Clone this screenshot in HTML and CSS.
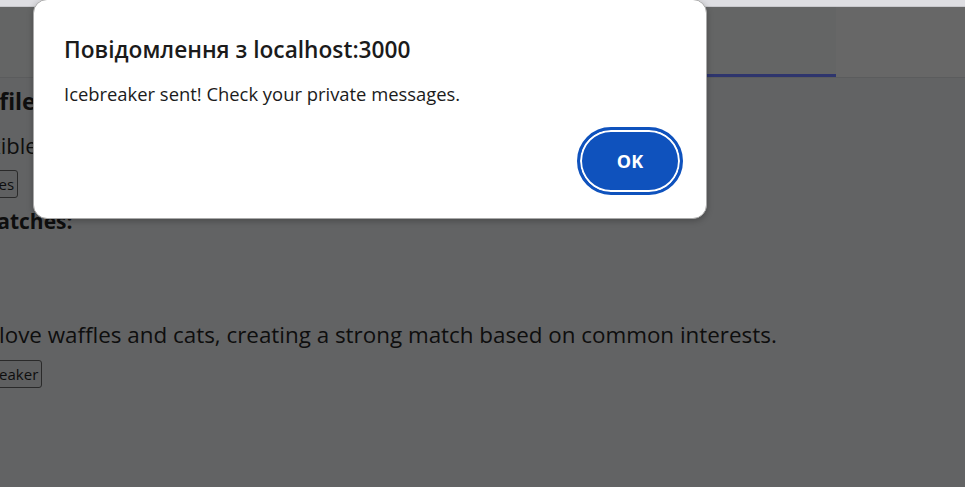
FILE: index.html
```html
<!DOCTYPE html>
<html lang="uk">
<head>
<meta charset="utf-8">
<title>Profile</title>
<link rel="stylesheet" href="styles.css">
</head>
<body>
<div class="chrome-strip"></div>
<header class="topbar">
  <div class="topbar-fill"></div>
  <div class="tab tab-active"></div>
  <div class="topbar-rest"></div>
</header>
<main class="page">
  <h2 class="heading">Profile</h2>
  <p class="line">Flexible schedule</p>
  <button class="btn">Images</button>
  <h3 class="subheading">3 Matches:</h3>
  <p class="line match-text">We love waffles and cats, creating a strong match based on common interests.</p>
  <button class="btn">Icebreaker</button>
</main>
<div class="dialog" role="alertdialog">
  <h1 class="dialog-title">Повідомлення з localhost:3000</h1>
  <p class="dialog-msg">Icebreaker sent! Check your private messages.</p>
  <div class="dialog-actions">
    <button class="ok-btn">OK</button>
  </div>
</div>
</body>
</html>
```
FILE: styles.css
```css
html, body {
  margin: 0;
  padding: 0;
}
body {
  width: 965px;
  height: 487px;
  overflow: hidden;
  background: #626364;
  font-family: "Open Sans", "Noto Sans", sans-serif;
  color: #0e0e0e;
  position: relative;
}
.chrome-strip {
  height: 6px;
  background: #dedee2;
  border-bottom: 1px solid #c9c9cd;
}
.topbar {
  display: flex;
  height: 70px;
  border-bottom: 1px solid #5b5c5d;
  background: #646565;
}
.topbar-fill {
  width: 707px;
}
.tab {
  width: 129px;
  box-sizing: border-box;
}
.tab-active {
  border-bottom: 3px solid #2e356d;
}
.topbar-rest {
  flex: 1;
  background: #676767;
}
.page {
  margin-left: -40px;
  padding-top: 7px;
  display: flex;
  flex-direction: column;
  align-items: flex-start;
}
.heading {
  margin: 0;
  font-size: 23px;
  font-weight: 700;
  line-height: 32px;
}
.line {
  margin: 13px 0 0;
  font-size: 22px;
  line-height: 30px;
}
.btn {
  font-family: "Open Sans", sans-serif;
  font-size: 15px;
  color: #0e0e0e;
  background: #5f6061;
  border: 1px solid #2a2a2a;
  border-radius: 3px;
  padding: 0 3px;
  height: 28px;
  line-height: 26px;
  margin-top: 10px;
}
.subheading {
  margin: 8px 0 0;
  font-size: 21px;
  font-weight: 700;
  line-height: 30px;
}
.match-text {
  margin-top: 84px;
  font-size: 22.4px;
}
.dialog {
  position: absolute;
  left: 33px;
  top: -1px;
  width: 674px;
  height: 220px;
  box-sizing: border-box;
  background: #fff;
  border: 1px solid #a9a9a9;
  border-radius: 14px;
  box-shadow: 0 2px 6px rgba(0, 0, 0, 0.25);
  padding: 35px 23px 0 30px;
  display: flex;
  flex-direction: column;
}
.dialog-title {
  margin: 0;
  font-size: 22.7px;
  font-weight: 600;
  line-height: 30px;
  color: #1b1b1b;
}
.dialog-msg {
  margin: 17px 0 0;
  font-size: 18.4px;
  line-height: 24px;
  color: #1b1b1b;
}
.dialog-actions {
  display: flex;
  justify-content: flex-end;
  margin-top: 21px;
}
.ok-btn {
  width: 106px;
  height: 68px;
  box-sizing: border-box;
  border-radius: 34px;
  background: #0f52bd;
  border: 3px solid #0f52bd;
  box-shadow: inset 0 0 0 2px #ffffff;
  color: #fff;
  font-family: "Open Sans", sans-serif;
  font-weight: 700;
  font-size: 18px;
}
```
